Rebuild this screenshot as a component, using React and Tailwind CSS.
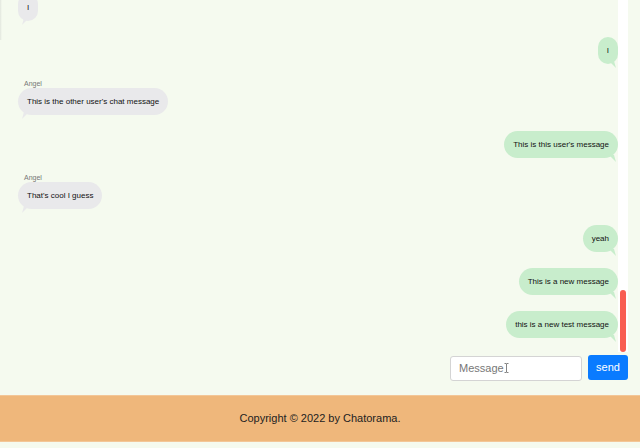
import { useState } from "react";

const MESSAGES = [
  { id: 1, mine: false, content: "I" },
  { id: 2, mine: true, content: "I" },
  { id: 3, mine: false, username: "Angel", content: "This is the other user's chat message" },
  { id: 4, mine: true, content: "This is this user's message" },
  { id: 5, mine: false, username: "Angel", content: "That's cool I guess" },
  { id: 6, mine: true, content: "yeah" },
  { id: 7, mine: true, content: "This is a new message" },
  { id: 8, mine: true, content: "this is a new test message" },
];

function Bubble({ msg }) {
  return (
    <div className={`flex flex-col ${msg.mine ? "items-end" : "items-start"} mb-[16px]`}>
      {msg.username && (
        <div className="text-[7px] leading-[7px] text-[#777] ml-[6px] mb-[1px]">{msg.username}</div>
      )}
      <div
        className={`relative h-[27px] flex items-center px-[9px] rounded-[14px] text-[8px] text-[#111] ${
          msg.mine ? "bg-[#c8edcc]" : "bg-[#e9e9eb]"
        }`}
      >
        {msg.content}
        {msg.mine ? (
          <svg className="absolute right-[1px] -bottom-[5px]" width="8" height="8" viewBox="0 0 8 8">
            <path d="M0 0 L7 7 L5 0 Z" fill="#c8edcc" />
          </svg>
        ) : (
          <svg className="absolute left-[3px] -bottom-[5px]" width="8" height="8" viewBox="0 0 8 8">
            <path d="M8 0 L1 7 L3 0 Z" fill="#e9e9eb" />
          </svg>
        )}
      </div>
    </div>
  );
}

export default function App() {
  const [message, setMessage] = useState("");

  return (
    <div
      className="w-[640px] h-[448px] bg-[#f5faef] flex flex-col overflow-hidden"
      style={{ fontFamily: '"Liberation Sans", Arial, sans-serif' }}
    >
      <div className="w-[628px] flex flex-col">
        <div className="flex h-[355px]">
          <div className="relative flex-1 h-full overflow-hidden flex flex-col justify-end pl-[18px] pb-[1px]">
            <div className="absolute left-0 top-0 w-[2px] h-[40px] bg-gradient-to-r from-[#e2e6de] to-transparent" />
            {MESSAGES.map((msg) => (
              <Bubble key={msg.id} msg={msg} />
            ))}
          </div>
          <div className="w-[10px] h-[352px] bg-white flex flex-col justify-end items-center">
            <div className="w-[6px] h-[62px] rounded-full bg-[#f95d52]" />
          </div>
        </div>

        <form
          onSubmit={(e) => {
            e.preventDefault();
            setMessage("");
          }}
          className="flex justify-end gap-[6px] h-[25px]"
        >
          <div className="relative w-[132px] h-full">
            <input
              type="text"
              value={message}
              onChange={(e) => setMessage(e.target.value)}
              placeholder="Message"
              className="w-full h-full bg-white border border-[#d4d4d4] rounded-[3px] pl-[8px] text-[11px] text-[#333] placeholder:text-[#777] outline-none"
            />
            <svg className="absolute left-[54px] top-[8px]" width="5" height="10" viewBox="0 0 5 10">
              <path d="M0.5 0.5 H2 Q2.5 0.5 2.5 1.5 V8.5 Q2.5 9.5 2 9.5 H0.5 M4.5 0.5 H3 Q2.5 0.5 2.5 1.5 M4.5 9.5 H3 Q2.5 9.5 2.5 8.5" stroke="#666" strokeWidth="0.8" fill="none" />
            </svg>
          </div>
          <button
            type="submit"
            className="w-[40px] h-full bg-[#0a7bff] text-white text-[11px] rounded-[3px]"
          >
            send
          </button>
        </form>
      </div>

      <footer className="mt-[15px] h-[47px] bg-[#efb77b] border-y border-[#f3c697] flex items-center justify-center text-[11px] text-[#222]">
        Copyright © 2022 by Chatorama.
      </footer>
    </div>
  );
}
